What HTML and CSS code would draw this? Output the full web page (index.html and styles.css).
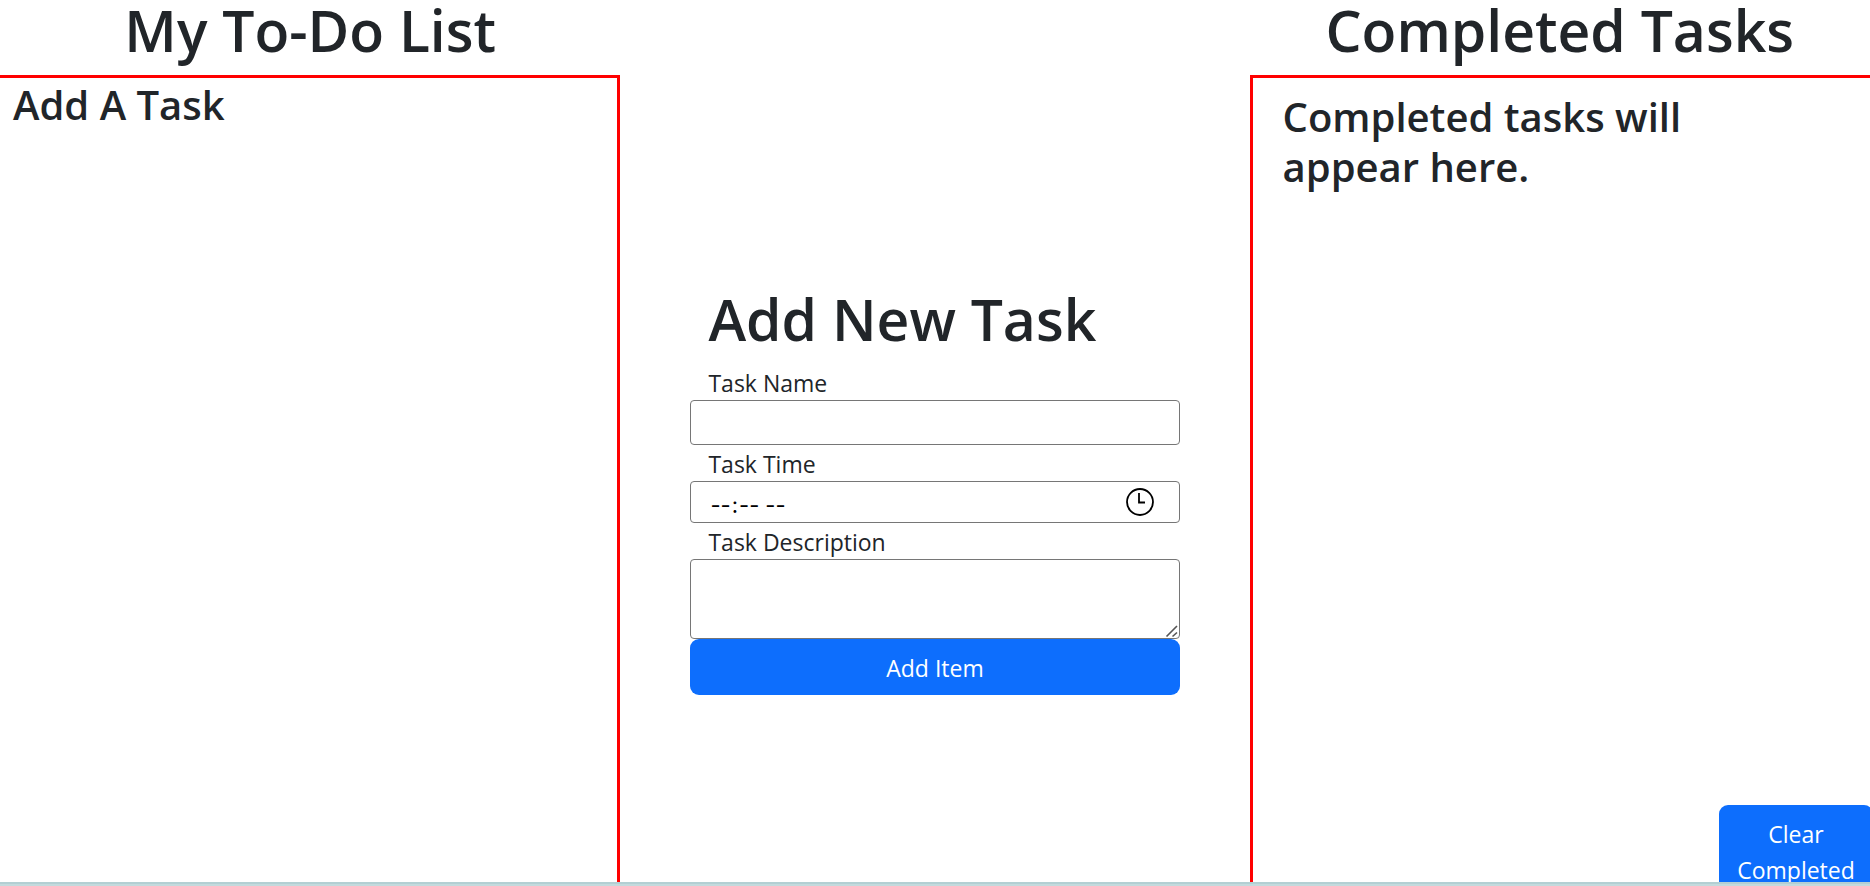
FILE: index.html
```html
<!DOCTYPE html>
<html lang="en-US">
<head>
<meta charset="utf-8">
<title>My To-Do List</title>
<link rel="stylesheet" href="styles.css">
</head>
<body>
<main class="board">
  <section class="column">
    <h1 class="title title-center">My To-Do List</h1>
    <div class="panel panel-todo">
      <h3 class="message">Add A Task</h3>
    </div>
  </section>
  <section class="column column-form">
    <form class="task-form">
      <h1 class="title title-form">Add New Task</h1>
      <label class="label" for="task-name">Task Name</label>
      <input class="field field-name" id="task-name" type="text">
      <label class="label" for="task-time">Task Time</label>
      <input class="field field-time" id="task-time" type="time">
      <label class="label" for="task-description">Task Description</label>
      <textarea class="field field-description" id="task-description"></textarea>
      <button class="button" type="button">Add Item</button>
    </form>
  </section>
  <section class="column">
    <h1 class="title title-center">Completed Tasks</h1>
    <div class="panel panel-done">
      <h3 class="message">Completed tasks will appear here.</h3>
      <button class="button button-clear" type="button">Clear Completed</button>
    </div>
  </section>
</main>
<footer class="strip"></footer>
</body>
</html>
```
FILE: styles.css
```css
* {
  box-sizing: border-box;
}

body {
  margin: 0;
  height: 100vh;
  display: flex;
  flex-direction: column;
  overflow: hidden;
  background: #fff;
  color: #212529;
  font-family: "Segoe UI", "Open Sans", sans-serif;
  font-size: 23px;
  line-height: 36px;
}

.board {
  flex: 1;
  min-height: 0;
  display: grid;
  grid-template-columns: 1fr 1.014fr 1fr;
  grid-template-rows: minmax(0, 1fr);
  overflow: hidden;
}

.column {
  display: flex;
  flex-direction: column;
  min-width: 0;
  min-height: 0;
}

.title {
  margin: 0 0 14px;
  font-size: 57px;
  line-height: 61px;
  font-weight: 550;
  white-space: nowrap;
}

.title-center {
  text-align: center;
}

.title-form {
  padding-left: 18px;
}

.panel {
  flex: 1;
  min-height: 0;
  display: flex;
  flex-direction: column;
  border-top: 3px solid #f00;
}

.panel-todo {
  border-right: 3px solid #f00;
  padding: 2px 0 0 13px;
}

.panel-done {
  border-left: 3px solid #f00;
  padding: 14px 0 0 30px;
}

.message {
  margin: 0;
  max-width: 440px;
  font-size: 40px;
  line-height: 50px;
  font-weight: 550;
}

.column-form {
  padding: 289px 70px 0;
}

.task-form {
  display: flex;
  flex-direction: column;
}

.label {
  padding: 2px 0 0 18px;
  line-height: 34px;
}

.field {
  width: 100%;
  margin: 0;
  padding: 0 18px;
  border: 1px solid #767676;
  border-radius: 4px;
  background: #fff;
  color: #000;
  font: inherit;
}

.field-name {
  height: 45px;
}

.field-time {
  height: 42px;
  font-family: Inter, sans-serif;
  font-size: 22px;
}

.field-time::-webkit-datetime-edit {
  padding-top: 6px;
}

.field-time::-webkit-calendar-picker-indicator {
  width: 28px;
  height: 28px;
  padding: 0;
  margin: 0 7px 0 0;
  background: url("data:image/svg+xml,%3Csvg xmlns='http://www.w3.org/2000/svg' viewBox='0 0 28 28' fill='none' stroke='black'%3E%3Ccircle cx='14' cy='14' r='13' stroke-width='1.8'/%3E%3Cpath d='M13 5v9.5h6' stroke-width='1.8'/%3E%3C/svg%3E") center / 28px 28px no-repeat;
}

.field-description {
  height: 80px;
  resize: vertical;
}

.field-description::-webkit-resizer {
  background: url("data:image/svg+xml,%3Csvg xmlns='http://www.w3.org/2000/svg' viewBox='0 0 15 15' fill='none' stroke='%23555' stroke-width='1.6'%3E%3Cpath d='M2.5 13.5 13 3M8.5 13.5 13 9.5'/%3E%3C/svg%3E") right bottom / 15px 15px no-repeat;
}

.button {
  padding: 11px 18px 9px;
  border: 0;
  border-radius: 9px;
  background: #0d6efd;
  color: #fff;
  font: inherit;
}

.button-clear {
  align-self: flex-end;
  flex-shrink: 0;
  width: 154px;
  margin: auto -3px -15px 0;
}

.strip {
  height: 4px;
  background: #c3dadd;
  border-top: 2px solid #b3cfd3;
}
```
